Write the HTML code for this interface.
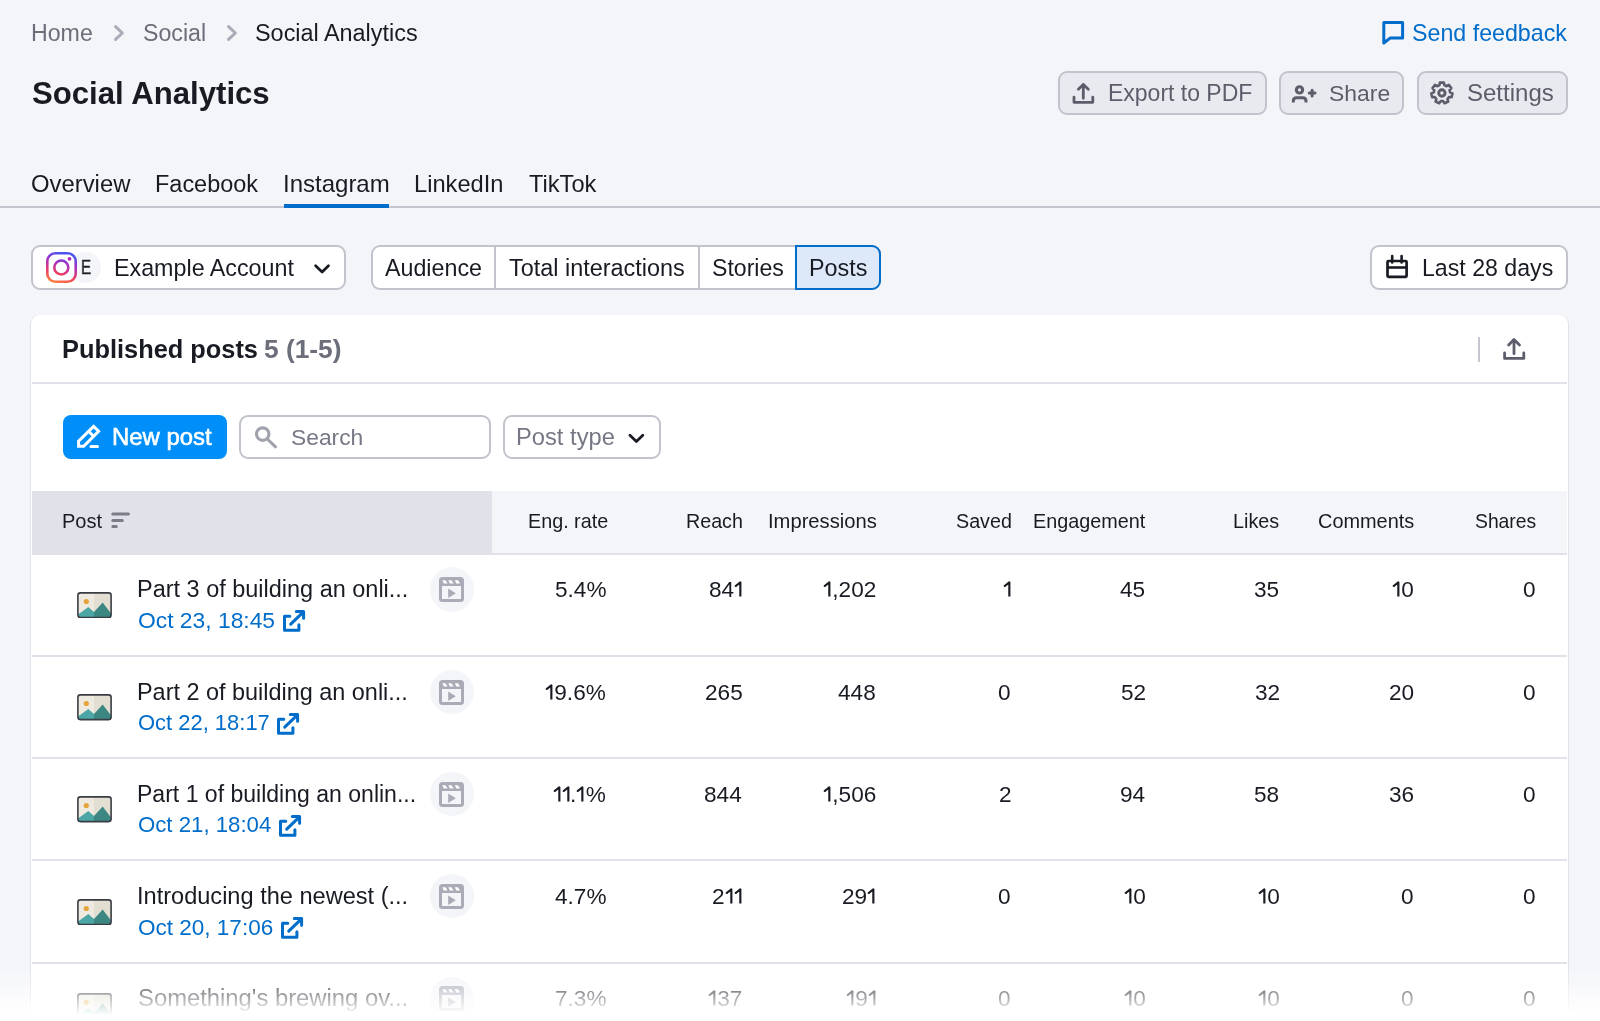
<!DOCTYPE html>
<html><head><meta charset="utf-8"><style>
html,body{margin:0;padding:0;}
body{width:1600px;height:1021px;overflow:hidden;position:relative;background:#f4f5f9;font-family:"Liberation Sans",sans-serif;}
.t{position:absolute;white-space:nowrap;will-change:transform;}
</style></head><body>
<div class="t" style="left:30.90px;top:20.00px;font-size:23.17px;line-height:26px;color:#6c6e79;">Home</div>
<svg style="position:absolute;left:105px;top:20px;width:30px;height:26px;" viewBox="0 0 30 26" fill="none"><path d="M10.6 6.6 L17.3 13 L10.6 19.4" stroke="#a9abb6" stroke-width="3" stroke-linecap="round" stroke-linejoin="round"/></svg>
<div class="t" style="left:142.66px;top:20.00px;font-size:23.18px;line-height:26px;color:#6c6e79;">Social</div>
<svg style="position:absolute;left:218px;top:20px;width:30px;height:26px;" viewBox="0 0 30 26" fill="none"><path d="M10.6 6.6 L17.3 13 L10.6 19.4" stroke="#a9abb6" stroke-width="3" stroke-linecap="round" stroke-linejoin="round"/></svg>
<div class="t" style="left:255.05px;top:20.00px;font-size:23.42px;line-height:26px;color:#191b23;">Social Analytics</div>
<svg style="position:absolute;left:1378px;top:16px;width:32px;height:32px;" viewBox="0 0 32 32" fill="none"><path d="M5.8 6.4 H24.6 V22.1 H12.1 L5.8 27 Z" stroke="#006dca" stroke-width="3" stroke-linejoin="round"/></svg>
<div class="t" style="left:1411.95px;top:20.00px;font-size:23.23px;line-height:26px;color:#006dca;">Send feedback</div>
<div class="t" style="left:31.57px;top:76.00px;font-size:31.15px;line-height:35px;font-weight:700;color:#191b23;">Social Analytics</div>
<div style="position:absolute;left:1058px;top:71px;width:209px;height:44px;box-sizing:border-box;border:2px solid #c1c4cc;border-radius:9px;background:#e9eaef;"></div>
<div style="position:absolute;left:1279px;top:71px;width:125px;height:44px;box-sizing:border-box;border:2px solid #c1c4cc;border-radius:9px;background:#e9eaef;"></div>
<div style="position:absolute;left:1417px;top:71px;width:151px;height:44px;box-sizing:border-box;border:2px solid #c1c4cc;border-radius:9px;background:#e9eaef;"></div>
<svg style="position:absolute;left:1068px;top:78px;width:32px;height:30px;" viewBox="0 0 32 30" fill="none"><path d="M15.3 20.3 V6.5 M10.4 11.3 L15.3 6.4 L20.3 11.3" stroke="#5b5e6a" stroke-width="2.8" stroke-linecap="round" stroke-linejoin="round"/><path d="M6 19.2 V24.3 H24.8 V19.2" stroke="#5b5e6a" stroke-width="2.8" stroke-linecap="round" stroke-linejoin="round"/></svg>
<div class="t" style="left:1107.86px;top:80.00px;font-size:22.99px;line-height:26px;color:#5b5e6a;">Export to PDF</div>
<svg style="position:absolute;left:1287px;top:78px;width:35px;height:30px;" viewBox="0 0 35 30" fill="none"><circle cx="12.5" cy="11.9" r="3.15" stroke="#5b5e6a" stroke-width="3.1"/><path d="M6.3 24.6 V23 Q6.3 19.7 9.6 19.7 H15.7 Q19 19.7 19 23 V24.6" stroke="#5b5e6a" stroke-width="3"/><path d="M25.1 12.2 V18 M22.2 15.1 H28" stroke="#5b5e6a" stroke-width="3" stroke-linecap="round"/></svg>
<div class="t" style="left:1329.47px;top:80.00px;font-size:22.91px;line-height:26px;color:#5b5e6a;">Share</div>
<svg style="position:absolute;left:1425px;top:76px;width:35px;height:34px;" viewBox="0 0 35 34" fill="none"><path d="M14.50 9.16 L14.88 6.59 L18.92 6.59 L19.30 9.16 L21.54 10.24 L23.77 8.93 L26.30 12.09 L24.53 13.99 L25.08 16.41 L27.49 17.34 L26.59 21.29 L24.01 21.08 L22.46 23.02 L23.24 25.50 L19.59 27.25 L18.14 25.11 L15.66 25.11 L14.21 27.25 L10.56 25.50 L11.34 23.02 L9.79 21.08 L7.21 21.29 L6.31 17.34 L8.72 16.41 L9.27 13.99 L7.50 12.09 L10.03 8.93 L12.26 10.24 Z" stroke="#5b5e6a" stroke-width="2.6" stroke-linejoin="round"/><circle cx="16.90" cy="17.00" r="3.2" stroke="#5b5e6a" stroke-width="2.9"/></svg>
<div class="t" style="left:1466.92px;top:79.00px;font-size:24.02px;line-height:27px;color:#5b5e6a;">Settings</div>
<div class="t" style="left:31.13px;top:170.00px;font-size:23.85px;line-height:27px;color:#191b23;">Overview</div>
<div class="t" style="left:155.42px;top:171.00px;font-size:23.48px;line-height:26px;color:#191b23;">Facebook</div>
<div class="t" style="left:283.14px;top:170.00px;font-size:24.00px;line-height:27px;color:#191b23;">Instagram</div>
<div class="t" style="left:414.11px;top:171.00px;font-size:23.66px;line-height:26px;color:#191b23;">LinkedIn</div>
<div class="t" style="left:529.23px;top:171.00px;font-size:23.64px;line-height:26px;color:#191b23;">TikTok</div>
<div style="position:absolute;left:0px;top:206px;width:1600px;height:2px;background:#c4c7cf;"></div>
<div style="position:absolute;left:284px;top:204px;width:105px;height:4px;background:#006dca;"></div>
<div style="position:absolute;left:31px;top:245px;width:315px;height:45px;box-sizing:border-box;border:2px solid #c1c4cc;border-radius:9px;background:#fff;"></div>
<div style="position:absolute;left:70px;top:252px;width:31px;height:31px;border-radius:50%;background:#f4f5f9;"></div>
<svg style="position:absolute;left:46px;top:252px;width:31px;height:31px;" viewBox="0 0 31 31" fill="none"><defs><linearGradient id="ig" gradientUnits="userSpaceOnUse" x1="12" y1="0" x2="3" y2="31"><stop offset="0" stop-color="#4b55f0"/><stop offset="0.3" stop-color="#a52ec4"/><stop offset="0.65" stop-color="#ec3f62"/><stop offset="1" stop-color="#ff8d3a"/></linearGradient></defs><rect x="1.3" y="1.3" width="28.4" height="28.4" rx="8" fill="#fff" stroke="url(#ig)" stroke-width="2.6"/><circle cx="15.3" cy="15.5" r="7" stroke="url(#ig)" stroke-width="2.6"/><circle cx="23.5" cy="6.8" r="1.9" fill="#b22bbd"/></svg>
<div class="t" style="left:81.00px;top:256.00px;font-size:20.00px;line-height:22px;color:#191b23;transform:scaleX(0.76);transform-origin:0 0;-webkit-text-stroke:0.35px #191b23;">E</div>
<div class="t" style="left:114.44px;top:255.00px;font-size:23.29px;line-height:26px;color:#191b23;">Example Account</div>
<svg style="position:absolute;left:308px;top:254px;width:28px;height:28px;" viewBox="0 0 28 28" fill="none"><path d="M7.6 11.7 L14.1 18 L20.5 11.7" stroke="#191b23" stroke-width="2.75" stroke-linecap="round" stroke-linejoin="round"/></svg>
<div style="position:absolute;left:371px;top:245px;width:510px;height:45px;box-sizing:border-box;border:2px solid #c1c4cc;border-radius:9px;background:#fff;"></div>
<div style="position:absolute;left:494px;top:245px;width:2px;height:45px;background:#c1c4cc;"></div>
<div style="position:absolute;left:697.5px;top:245px;width:2.0px;height:45px;background:#c1c4cc;"></div>
<div style="position:absolute;left:795px;top:245px;width:86px;height:45px;box-sizing:border-box;border:2px solid #006dca;border-radius:0 9px 9px 0;background:#dde9f9;"></div>
<div class="t" style="left:385.30px;top:255.00px;font-size:23.25px;line-height:26px;color:#191b23;">Audience</div>
<div class="t" style="left:509.13px;top:255.00px;font-size:23.42px;line-height:26px;color:#191b23;">Total interactions</div>
<div class="t" style="left:711.76px;top:255.00px;font-size:23.10px;line-height:26px;color:#191b23;">Stories</div>
<div class="t" style="left:808.83px;top:255.00px;font-size:23.35px;line-height:26px;color:#191b23;">Posts</div>
<div style="position:absolute;left:1370px;top:245px;width:198px;height:45px;box-sizing:border-box;border:2px solid #c1c4cc;border-radius:9px;background:#fff;"></div>
<svg style="position:absolute;left:1382px;top:250px;width:30px;height:33px;" viewBox="0 0 30 33" fill="none"><rect x="5.5" y="11" width="19.1" height="15.8" rx="1" stroke="#191b23" stroke-width="2.7"/><path d="M5.5 17.5 H24.6" stroke="#191b23" stroke-width="2.6"/><path d="M10.2 6.1 V12.4 M19.6 6.1 V12.4" stroke="#191b23" stroke-width="2.6" stroke-linecap="round"/></svg>
<div class="t" style="left:1422.05px;top:255.00px;font-size:23.15px;line-height:26px;color:#191b23;">Last 28 days</div>
<div style="position:absolute;left:30.2px;top:314.7px;width:1538.3999999999999px;height:785.3px;box-sizing:border-box;border:1.5px solid #e0e1e9;border-top:none;border-radius:9px;background:#fff;"></div>
<div class="t" style="left:61.95px;top:335.00px;font-size:25.38px;line-height:28px;font-weight:700;color:#191b23;">Published posts</div>
<div class="t" style="left:263.61px;top:334.00px;font-size:26.32px;line-height:30px;font-weight:700;color:#6c6e79;">5 (1-5)</div>
<div style="position:absolute;left:1478px;top:337px;width:1.5px;height:24.5px;background:#c4c7cf;"></div>
<svg style="position:absolute;left:1500px;top:335px;width:30px;height:30px;" viewBox="0 0 30 30" fill="none"><path d="M14 18.7 V4.6 M8.6 10.1 L14 4.6 L19.5 10.1" stroke="#5b5e6a" stroke-width="2.8" stroke-linecap="round" stroke-linejoin="round"/><path d="M4.6 17.9 V23.4 H23.8 V17.9" stroke="#5b5e6a" stroke-width="2.8" stroke-linecap="round" stroke-linejoin="round"/></svg>
<div style="position:absolute;left:32px;top:382px;width:1535px;height:2px;background:#e0e1e9;"></div>
<div style="position:absolute;left:63px;top:415px;width:163.5px;height:44px;border-radius:8px;background:#008ff8;"></div>
<svg style="position:absolute;left:72px;top:420px;width:32px;height:32px;" viewBox="0 0 32 32" fill="none"><path d="M6.6 26.3 V21.1 L21.6 6.4 L26.6 11.3 L11.7 26.3 Z M16.6 11.4 L21.6 16.3" stroke="#fff" stroke-width="3" stroke-linejoin="miter"/><path d="M19 26.6 H25.5" stroke="#fff" stroke-width="3" stroke-linecap="round"/></svg>
<div class="t" style="left:112.49px;top:423.00px;font-size:23.90px;line-height:27px;color:#fff;-webkit-text-stroke:0.6px #fff;">New post</div>
<div style="position:absolute;left:239px;top:415px;width:252px;height:44px;box-sizing:border-box;border:2px solid #c1c4cc;border-radius:9px;background:#fff;"></div>
<svg style="position:absolute;left:250px;top:422px;width:32px;height:32px;" viewBox="0 0 32 32" fill="none"><circle cx="12.7" cy="12.1" r="6.25" stroke="#a0a3ad" stroke-width="3.1"/><path d="M17.3 17 L25.5 24.8" stroke="#a0a3ad" stroke-width="3.1" stroke-linecap="round"/></svg>
<div class="t" style="left:291.17px;top:424.00px;font-size:22.82px;line-height:26px;color:#757884;">Search</div>
<div style="position:absolute;left:503px;top:415px;width:158px;height:44px;box-sizing:border-box;border:2px solid #c1c4cc;border-radius:9px;background:#fff;"></div>
<div class="t" style="left:516.40px;top:424.00px;font-size:23.73px;line-height:26px;color:#757884;">Post type</div>
<svg style="position:absolute;left:622px;top:424px;width:28px;height:28px;" viewBox="0 0 28 28" fill="none"><path d="M7.95 11.25 L14.4 17.55 L20.8 11.25" stroke="#191b23" stroke-width="2.75" stroke-linecap="round" stroke-linejoin="round"/></svg>
<div style="position:absolute;left:32px;top:491px;width:1535px;height:63px;background:#f4f5f9;"></div>
<div style="position:absolute;left:32px;top:491px;width:460px;height:63px;background:#e0e1e9;"></div>
<div style="position:absolute;left:32px;top:553px;width:1535px;height:1.7999999999999545px;background:#e0e1e9;"></div>
<div class="t" style="left:61.50px;top:510.00px;font-size:20.05px;line-height:22px;color:#191b23;">Post</div>
<svg style="position:absolute;left:106px;top:506px;width:30px;height:28px;" viewBox="0 0 30 28" fill="none"><path d="M6.8 8.1 H22.4 M6.8 14.4 H16.3 M6.8 20.6 H10.3" stroke="#7a7c86" stroke-width="3" stroke-linecap="round"/></svg>
<div class="t" style="left:528.02px;top:510.00px;font-size:19.76px;line-height:22px;color:#191b23;">Eng. rate</div>
<div class="t" style="left:685.93px;top:510.00px;font-size:19.67px;line-height:22px;color:#191b23;">Reach</div>
<div class="t" style="left:768.18px;top:510.00px;font-size:20.18px;line-height:22px;color:#191b23;">Impressions</div>
<div class="t" style="left:955.86px;top:510.00px;font-size:19.72px;line-height:22px;color:#191b23;">Saved</div>
<div class="t" style="left:1032.92px;top:510.00px;font-size:19.79px;line-height:22px;color:#191b23;">Engagement</div>
<div class="t" style="left:1233.21px;top:510.00px;font-size:19.82px;line-height:22px;color:#191b23;">Likes</div>
<div class="t" style="left:1318.00px;top:510.00px;font-size:19.92px;line-height:22px;color:#191b23;">Comments</div>
<div class="t" style="left:1474.83px;top:511.00px;font-size:19.32px;line-height:21px;color:#191b23;">Shares</div>
<svg style="position:absolute;left:77px;top:591.9px;width:35px;height:26.5px;" viewBox="0 35 26.5" fill="none"><rect x="1" y="1" width="33" height="24.5" rx="2.5" fill="#efeadf"/><rect x="17" y="1" width="17" height="24.5" fill="#e2ded2"/><circle cx="9.3" cy="9.5" r="2.6" fill="#e5a53a"/><path d="M1 22.5 L11.3 15 L17 20 V25.5 H1 Z" fill="#4ba6a5"/><path d="M17 20 L25.7 10.5 L34 21.5 V25.5 H17 Z" fill="#3d8783"/><rect x="0.9" y="0.9" width="33.2" height="24.7" rx="2.5" stroke="#3a3d44" stroke-width="1.6"/></svg>
<div class="t" style="left:136.82px;top:576.00px;font-size:23.47px;line-height:26px;color:#191b23;">Part 3 of building an onli...</div>
<div class="t" style="left:137.67px;top:607.00px;font-size:22.84px;line-height:26px;color:#006dca;">Oct 23, 18:45</div>
<svg style="position:absolute;left:282.59999999999997px;top:610.0px;width:26.0px;height:30.0px;" viewBox="0 26 30" fill="none"><path d="M6.8 6.2 H1.5 V20.3 H15.9 V14.7" stroke="#006dca" stroke-width="3" stroke-linecap="round" stroke-linejoin="round"/><path d="M7.7 14.1 L19.7 2.6 M13.3 1.5 H20.6 V8.2" stroke="#006dca" stroke-width="3" stroke-linecap="round" stroke-linejoin="round"/></svg>
<div style="position:absolute;left:430px;top:567.4px;width:44px;height:44.200000000000045px;border-radius:50%;background:#f4f5f9;"></div>
<svg style="position:absolute;left:439.3px;top:577.1px;width:26.0px;height:25.0px;" viewBox="0 26 25" fill="none"><rect x="1.5" y="1.5" width="22" height="22" rx="2" stroke="#a9abb6" stroke-width="3"/><rect x="1.5" y="1.5" width="22" height="7.5" fill="#a9abb6"/><path d="M3.3 3.2 H6.4 L8.6 6.6 H4.8 Z M9.3 3.2 H12.4 L14.6 6.6 H10.8 Z M15.8 3.2 H18.9 L21.1 6.6 H17.3 Z" fill="#fff"/><path d="M9.2 11.5 L16.8 16.2 L9.2 20.9 Z" fill="#a9abb6"/></svg>
<div class="t" style="left:554.66px;top:577.00px;font-size:22.60px;line-height:25px;color:#191b23;">5.4%</div>
<div class="t" style="left:708.86px;top:577.00px;font-size:22.60px;line-height:25px;color:#191b23;">84<span style="display:inline-block;width:9.3px;height:16.6px;vertical-align:baseline;margin-right:-0px"><svg width="9.3" height="16.6" viewBox="0 0 9.3 16.6" style="display:block" fill="none"><path d="M1.7 6.0 L6.35 2.3 V16.6" stroke="#191b23" stroke-width="2.15" stroke-linejoin="round"/><circle cx="1.7" cy="6.0" r="1.07" fill="#191b23"/></svg></span></div>
<div class="t" style="left:822.87px;top:577.00px;font-size:22.60px;line-height:25px;color:#191b23;"><span style="display:inline-block;width:9.3px;height:16.6px;vertical-align:baseline;margin-right:-0px"><svg width="9.3" height="16.6" viewBox="0 0 9.3 16.6" style="display:block" fill="none"><path d="M1.7 6.0 L6.35 2.3 V16.6" stroke="#191b23" stroke-width="2.15" stroke-linejoin="round"/><circle cx="1.7" cy="6.0" r="1.07" fill="#191b23"/></svg></span>,202</div>
<div class="t" style="left:1002.80px;top:577.00px;font-size:22.60px;line-height:25px;color:#191b23;"><span style="display:inline-block;width:9.3px;height:16.6px;vertical-align:baseline;margin-right:-0px"><svg width="9.3" height="16.6" viewBox="0 0 9.3 16.6" style="display:block" fill="none"><path d="M1.7 6.0 L6.35 2.3 V16.6" stroke="#191b23" stroke-width="2.15" stroke-linejoin="round"/><circle cx="1.7" cy="6.0" r="1.07" fill="#191b23"/></svg></span></div>
<div class="t" style="left:1120.39px;top:577.00px;font-size:22.60px;line-height:25px;color:#191b23;">45</div>
<div class="t" style="left:1254.39px;top:577.00px;font-size:22.60px;line-height:25px;color:#191b23;">35</div>
<div class="t" style="left:1392.15px;top:577.00px;font-size:22.60px;line-height:25px;color:#191b23;"><span style="display:inline-block;width:9.3px;height:16.6px;vertical-align:baseline;margin-right:-0px"><svg width="9.3" height="16.6" viewBox="0 0 9.3 16.6" style="display:block" fill="none"><path d="M1.7 6.0 L6.35 2.3 V16.6" stroke="#191b23" stroke-width="2.15" stroke-linejoin="round"/><circle cx="1.7" cy="6.0" r="1.07" fill="#191b23"/></svg></span>0</div>
<div class="t" style="left:1523.25px;top:577.00px;font-size:22.60px;line-height:25px;color:#191b23;">0</div>
<div style="position:absolute;left:32px;top:655px;width:1535px;height:2px;background:#e2e3ea;"></div>
<svg style="position:absolute;left:77px;top:694.4px;width:35px;height:26.5px;" viewBox="0 35 26.5" fill="none"><rect x="1" y="1" width="33" height="24.5" rx="2.5" fill="#efeadf"/><rect x="17" y="1" width="17" height="24.5" fill="#e2ded2"/><circle cx="9.3" cy="9.5" r="2.6" fill="#e5a53a"/><path d="M1 22.5 L11.3 15 L17 20 V25.5 H1 Z" fill="#4ba6a5"/><path d="M17 20 L25.7 10.5 L34 21.5 V25.5 H17 Z" fill="#3d8783"/><rect x="0.9" y="0.9" width="33.2" height="24.7" rx="2.5" stroke="#3a3d44" stroke-width="1.6"/></svg>
<div class="t" style="left:136.83px;top:679.00px;font-size:23.43px;line-height:26px;color:#191b23;">Part 2 of building an onli...</div>
<div class="t" style="left:137.71px;top:710.00px;font-size:21.96px;line-height:25px;color:#006dca;">Oct 22, 18:17</div>
<svg style="position:absolute;left:277.2px;top:712.5px;width:26.0px;height:30.0px;" viewBox="0 26 30" fill="none"><path d="M6.8 6.2 H1.5 V20.3 H15.9 V14.7" stroke="#006dca" stroke-width="3" stroke-linecap="round" stroke-linejoin="round"/><path d="M7.7 14.1 L19.7 2.6 M13.3 1.5 H20.6 V8.2" stroke="#006dca" stroke-width="3" stroke-linecap="round" stroke-linejoin="round"/></svg>
<div style="position:absolute;left:430px;top:669.9px;width:44px;height:44.200000000000045px;border-radius:50%;background:#f4f5f9;"></div>
<svg style="position:absolute;left:439.3px;top:679.6px;width:26.0px;height:25.0px;" viewBox="0 26 25" fill="none"><rect x="1.5" y="1.5" width="22" height="22" rx="2" stroke="#a9abb6" stroke-width="3"/><rect x="1.5" y="1.5" width="22" height="7.5" fill="#a9abb6"/><path d="M3.3 3.2 H6.4 L8.6 6.6 H4.8 Z M9.3 3.2 H12.4 L14.6 6.6 H10.8 Z M15.8 3.2 H18.9 L21.1 6.6 H17.3 Z" fill="#fff"/><path d="M9.2 11.5 L16.8 16.2 L9.2 20.9 Z" fill="#a9abb6"/></svg>
<div class="t" style="left:545.36px;top:680.00px;font-size:22.60px;line-height:25px;color:#191b23;"><span style="display:inline-block;width:9.3px;height:16.6px;vertical-align:baseline;margin-right:-0px"><svg width="9.3" height="16.6" viewBox="0 0 9.3 16.6" style="display:block" fill="none"><path d="M1.7 6.0 L6.35 2.3 V16.6" stroke="#191b23" stroke-width="2.15" stroke-linejoin="round"/><circle cx="1.7" cy="6.0" r="1.07" fill="#191b23"/></svg></span>9.6%</div>
<div class="t" style="left:704.62px;top:680.00px;font-size:22.60px;line-height:25px;color:#191b23;">265</div>
<div class="t" style="left:838.22px;top:680.00px;font-size:22.60px;line-height:25px;color:#191b23;">448</div>
<div class="t" style="left:998.45px;top:680.00px;font-size:22.60px;line-height:25px;color:#191b23;">0</div>
<div class="t" style="left:1120.62px;top:680.00px;font-size:22.60px;line-height:25px;color:#191b23;">52</div>
<div class="t" style="left:1254.62px;top:680.00px;font-size:22.60px;line-height:25px;color:#191b23;">32</div>
<div class="t" style="left:1388.88px;top:680.00px;font-size:22.60px;line-height:25px;color:#191b23;">20</div>
<div class="t" style="left:1523.25px;top:680.00px;font-size:22.60px;line-height:25px;color:#191b23;">0</div>
<div style="position:absolute;left:32px;top:757px;width:1535px;height:2px;background:#e2e3ea;"></div>
<svg style="position:absolute;left:77px;top:796.4px;width:35px;height:26.5px;" viewBox="0 35 26.5" fill="none"><rect x="1" y="1" width="33" height="24.5" rx="2.5" fill="#efeadf"/><rect x="17" y="1" width="17" height="24.5" fill="#e2ded2"/><circle cx="9.3" cy="9.5" r="2.6" fill="#e5a53a"/><path d="M1 22.5 L11.3 15 L17 20 V25.5 H1 Z" fill="#4ba6a5"/><path d="M17 20 L25.7 10.5 L34 21.5 V25.5 H17 Z" fill="#3d8783"/><rect x="0.9" y="0.9" width="33.2" height="24.7" rx="2.5" stroke="#3a3d44" stroke-width="1.6"/></svg>
<div class="t" style="left:136.86px;top:781.00px;font-size:23.04px;line-height:26px;color:#191b23;">Part 1 of building an onlin...</div>
<div class="t" style="left:137.70px;top:812.00px;font-size:22.21px;line-height:25px;color:#006dca;">Oct 21, 18:04</div>
<svg style="position:absolute;left:279.09999999999997px;top:814.5px;width:26.0px;height:30.0px;" viewBox="0 26 30" fill="none"><path d="M6.8 6.2 H1.5 V20.3 H15.9 V14.7" stroke="#006dca" stroke-width="3" stroke-linecap="round" stroke-linejoin="round"/><path d="M7.7 14.1 L19.7 2.6 M13.3 1.5 H20.6 V8.2" stroke="#006dca" stroke-width="3" stroke-linecap="round" stroke-linejoin="round"/></svg>
<div style="position:absolute;left:430px;top:771.9px;width:44px;height:44.200000000000045px;border-radius:50%;background:#f4f5f9;"></div>
<svg style="position:absolute;left:439.3px;top:781.6px;width:26.0px;height:25.0px;" viewBox="0 26 25" fill="none"><rect x="1.5" y="1.5" width="22" height="22" rx="2" stroke="#a9abb6" stroke-width="3"/><rect x="1.5" y="1.5" width="22" height="7.5" fill="#a9abb6"/><path d="M3.3 3.2 H6.4 L8.6 6.6 H4.8 Z M9.3 3.2 H12.4 L14.6 6.6 H10.8 Z M15.8 3.2 H18.9 L21.1 6.6 H17.3 Z" fill="#fff"/><path d="M9.2 11.5 L16.8 16.2 L9.2 20.9 Z" fill="#a9abb6"/></svg>
<div class="t" style="left:553.40px;top:782.00px;font-size:22.60px;line-height:25px;color:#191b23;"><span style="display:inline-block;width:9.3px;height:16.6px;vertical-align:baseline;margin-right:-0px"><svg width="9.3" height="16.6" viewBox="0 0 9.3 16.6" style="display:block" fill="none"><path d="M1.7 6.0 L6.35 2.3 V16.6" stroke="#191b23" stroke-width="2.15" stroke-linejoin="round"/><circle cx="1.7" cy="6.0" r="1.07" fill="#191b23"/></svg></span><span style="display:inline-block;width:9.3px;height:16.6px;vertical-align:baseline;margin-right:-1.5px"><svg width="9.3" height="16.6" viewBox="0 0 9.3 16.6" style="display:block" fill="none"><path d="M1.7 6.0 L6.35 2.3 V16.6" stroke="#191b23" stroke-width="2.15" stroke-linejoin="round"/><circle cx="1.7" cy="6.0" r="1.07" fill="#191b23"/></svg></span>.<span style="display:inline-block;width:9.3px;height:16.6px;vertical-align:baseline;margin-right:-0px"><svg width="9.3" height="16.6" viewBox="0 0 9.3 16.6" style="display:block" fill="none"><path d="M1.7 6.0 L6.35 2.3 V16.6" stroke="#191b23" stroke-width="2.15" stroke-linejoin="round"/><circle cx="1.7" cy="6.0" r="1.07" fill="#191b23"/></svg></span>%</div>
<div class="t" style="left:704.40px;top:782.00px;font-size:22.60px;line-height:25px;color:#191b23;">844</div>
<div class="t" style="left:822.64px;top:782.00px;font-size:22.60px;line-height:25px;color:#191b23;"><span style="display:inline-block;width:9.3px;height:16.6px;vertical-align:baseline;margin-right:-0px"><svg width="9.3" height="16.6" viewBox="0 0 9.3 16.6" style="display:block" fill="none"><path d="M1.7 6.0 L6.35 2.3 V16.6" stroke="#191b23" stroke-width="2.15" stroke-linejoin="round"/><circle cx="1.7" cy="6.0" r="1.07" fill="#191b23"/></svg></span>,506</div>
<div class="t" style="left:998.79px;top:782.00px;font-size:22.60px;line-height:25px;color:#191b23;">2</div>
<div class="t" style="left:1120.17px;top:782.00px;font-size:22.60px;line-height:25px;color:#191b23;">94</div>
<div class="t" style="left:1254.39px;top:782.00px;font-size:22.60px;line-height:25px;color:#191b23;">58</div>
<div class="t" style="left:1388.99px;top:782.00px;font-size:22.60px;line-height:25px;color:#191b23;">36</div>
<div class="t" style="left:1523.25px;top:782.00px;font-size:22.60px;line-height:25px;color:#191b23;">0</div>
<div style="position:absolute;left:32px;top:859px;width:1535px;height:2px;background:#e2e3ea;"></div>
<svg style="position:absolute;left:77px;top:898.5px;width:35px;height:26.5px;" viewBox="0 35 26.5" fill="none"><rect x="1" y="1" width="33" height="24.5" rx="2.5" fill="#efeadf"/><rect x="17" y="1" width="17" height="24.5" fill="#e2ded2"/><circle cx="9.3" cy="9.5" r="2.6" fill="#e5a53a"/><path d="M1 22.5 L11.3 15 L17 20 V25.5 H1 Z" fill="#4ba6a5"/><path d="M17 20 L25.7 10.5 L34 21.5 V25.5 H17 Z" fill="#3d8783"/><rect x="0.9" y="0.9" width="33.2" height="24.7" rx="2.5" stroke="#3a3d44" stroke-width="1.6"/></svg>
<div class="t" style="left:136.58px;top:883.00px;font-size:23.57px;line-height:26px;color:#191b23;">Introducing the newest (...</div>
<div class="t" style="left:137.69px;top:915.00px;font-size:22.52px;line-height:25px;color:#006dca;">Oct 20, 17:06</div>
<svg style="position:absolute;left:280.7px;top:916.6px;width:26.0px;height:30.0px;" viewBox="0 26 30" fill="none"><path d="M6.8 6.2 H1.5 V20.3 H15.9 V14.7" stroke="#006dca" stroke-width="3" stroke-linecap="round" stroke-linejoin="round"/><path d="M7.7 14.1 L19.7 2.6 M13.3 1.5 H20.6 V8.2" stroke="#006dca" stroke-width="3" stroke-linecap="round" stroke-linejoin="round"/></svg>
<div style="position:absolute;left:430px;top:874.0px;width:44px;height:44.200000000000045px;border-radius:50%;background:#f4f5f9;"></div>
<svg style="position:absolute;left:439.3px;top:883.7px;width:26.0px;height:25.0px;" viewBox="0 26 25" fill="none"><rect x="1.5" y="1.5" width="22" height="22" rx="2" stroke="#a9abb6" stroke-width="3"/><rect x="1.5" y="1.5" width="22" height="7.5" fill="#a9abb6"/><path d="M3.3 3.2 H6.4 L8.6 6.6 H4.8 Z M9.3 3.2 H12.4 L14.6 6.6 H10.8 Z M15.8 3.2 H18.9 L21.1 6.6 H17.3 Z" fill="#fff"/><path d="M9.2 11.5 L16.8 16.2 L9.2 20.9 Z" fill="#a9abb6"/></svg>
<div class="t" style="left:554.66px;top:884.00px;font-size:22.60px;line-height:25px;color:#191b23;">4.7%</div>
<div class="t" style="left:712.13px;top:884.00px;font-size:22.60px;line-height:25px;color:#191b23;">2<span style="display:inline-block;width:9.3px;height:16.6px;vertical-align:baseline;margin-right:-0px"><svg width="9.3" height="16.6" viewBox="0 0 9.3 16.6" style="display:block" fill="none"><path d="M1.7 6.0 L6.35 2.3 V16.6" stroke="#191b23" stroke-width="2.15" stroke-linejoin="round"/><circle cx="1.7" cy="6.0" r="1.07" fill="#191b23"/></svg></span><span style="display:inline-block;width:9.3px;height:16.6px;vertical-align:baseline;margin-right:-0px"><svg width="9.3" height="16.6" viewBox="0 0 9.3 16.6" style="display:block" fill="none"><path d="M1.7 6.0 L6.35 2.3 V16.6" stroke="#191b23" stroke-width="2.15" stroke-linejoin="round"/><circle cx="1.7" cy="6.0" r="1.07" fill="#191b23"/></svg></span></div>
<div class="t" style="left:842.46px;top:884.00px;font-size:22.60px;line-height:25px;color:#191b23;">29<span style="display:inline-block;width:9.3px;height:16.6px;vertical-align:baseline;margin-right:-0px"><svg width="9.3" height="16.6" viewBox="0 0 9.3 16.6" style="display:block" fill="none"><path d="M1.7 6.0 L6.35 2.3 V16.6" stroke="#191b23" stroke-width="2.15" stroke-linejoin="round"/><circle cx="1.7" cy="6.0" r="1.07" fill="#191b23"/></svg></span></div>
<div class="t" style="left:998.45px;top:884.00px;font-size:22.60px;line-height:25px;color:#191b23;">0</div>
<div class="t" style="left:1123.55px;top:884.00px;font-size:22.60px;line-height:25px;color:#191b23;"><span style="display:inline-block;width:9.3px;height:16.6px;vertical-align:baseline;margin-right:-0px"><svg width="9.3" height="16.6" viewBox="0 0 9.3 16.6" style="display:block" fill="none"><path d="M1.7 6.0 L6.35 2.3 V16.6" stroke="#191b23" stroke-width="2.15" stroke-linejoin="round"/><circle cx="1.7" cy="6.0" r="1.07" fill="#191b23"/></svg></span>0</div>
<div class="t" style="left:1257.55px;top:884.00px;font-size:22.60px;line-height:25px;color:#191b23;"><span style="display:inline-block;width:9.3px;height:16.6px;vertical-align:baseline;margin-right:-0px"><svg width="9.3" height="16.6" viewBox="0 0 9.3 16.6" style="display:block" fill="none"><path d="M1.7 6.0 L6.35 2.3 V16.6" stroke="#191b23" stroke-width="2.15" stroke-linejoin="round"/><circle cx="1.7" cy="6.0" r="1.07" fill="#191b23"/></svg></span>0</div>
<div class="t" style="left:1401.45px;top:884.00px;font-size:22.60px;line-height:25px;color:#191b23;">0</div>
<div class="t" style="left:1523.25px;top:884.00px;font-size:22.60px;line-height:25px;color:#191b23;">0</div>
<div style="position:absolute;left:32px;top:962px;width:1535px;height:2px;background:#e2e3ea;"></div>
<svg style="position:absolute;left:77px;top:993.0px;width:35px;height:26.5px;" viewBox="0 35 26.5" fill="none"><rect x="1" y="1" width="33" height="24.5" rx="2.5" fill="#efeadf"/><rect x="17" y="1" width="17" height="24.5" fill="#e2ded2"/><circle cx="9.3" cy="9.5" r="2.6" fill="#e5a53a"/><path d="M1 22.5 L11.3 15 L17 20 V25.5 H1 Z" fill="#4ba6a5"/><path d="M17 20 L25.7 10.5 L34 21.5 V25.5 H17 Z" fill="#3d8783"/><rect x="0.9" y="0.9" width="33.2" height="24.7" rx="2.5" stroke="#3a3d44" stroke-width="1.6"/></svg>
<div class="t" style="left:137.63px;top:984.00px;font-size:23.82px;line-height:27px;color:#191b23;">Something's brewing ov...</div>
<div class="t" style="left:137.69px;top:1017.00px;font-size:22.50px;line-height:25px;color:#006dca;">Oct 19, 12:00</div>
<svg style="position:absolute;left:280.7px;top:1019.3000000000001px;width:26.0px;height:29.999999999999886px;" viewBox="0 26 30" fill="none"><path d="M6.8 6.2 H1.5 V20.3 H15.9 V14.7" stroke="#006dca" stroke-width="3" stroke-linecap="round" stroke-linejoin="round"/><path d="M7.7 14.1 L19.7 2.6 M13.3 1.5 H20.6 V8.2" stroke="#006dca" stroke-width="3" stroke-linecap="round" stroke-linejoin="round"/></svg>
<div style="position:absolute;left:430px;top:976.7px;width:44px;height:44.200000000000045px;border-radius:50%;background:#f4f5f9;"></div>
<svg style="position:absolute;left:439.3px;top:986.4000000000001px;width:26.0px;height:25.0px;" viewBox="0 26 25" fill="none"><rect x="1.5" y="1.5" width="22" height="22" rx="2" stroke="#a9abb6" stroke-width="3"/><rect x="1.5" y="1.5" width="22" height="7.5" fill="#a9abb6"/><path d="M3.3 3.2 H6.4 L8.6 6.6 H4.8 Z M9.3 3.2 H12.4 L14.6 6.6 H10.8 Z M15.8 3.2 H18.9 L21.1 6.6 H17.3 Z" fill="#fff"/><path d="M9.2 11.5 L16.8 16.2 L9.2 20.9 Z" fill="#a9abb6"/></svg>
<div class="t" style="left:554.66px;top:986.00px;font-size:22.60px;line-height:25px;color:#191b23;">7.3%</div>
<div class="t" style="left:708.12px;top:986.00px;font-size:22.60px;line-height:25px;color:#191b23;"><span style="display:inline-block;width:9.3px;height:16.6px;vertical-align:baseline;margin-right:-0px"><svg width="9.3" height="16.6" viewBox="0 0 9.3 16.6" style="display:block" fill="none"><path d="M1.7 6.0 L6.35 2.3 V16.6" stroke="#191b23" stroke-width="2.15" stroke-linejoin="round"/><circle cx="1.7" cy="6.0" r="1.07" fill="#191b23"/></svg></span>37</div>
<div class="t" style="left:845.73px;top:986.00px;font-size:22.60px;line-height:25px;color:#191b23;"><span style="display:inline-block;width:9.3px;height:16.6px;vertical-align:baseline;margin-right:-0px"><svg width="9.3" height="16.6" viewBox="0 0 9.3 16.6" style="display:block" fill="none"><path d="M1.7 6.0 L6.35 2.3 V16.6" stroke="#191b23" stroke-width="2.15" stroke-linejoin="round"/><circle cx="1.7" cy="6.0" r="1.07" fill="#191b23"/></svg></span>9<span style="display:inline-block;width:9.3px;height:16.6px;vertical-align:baseline;margin-right:-0px"><svg width="9.3" height="16.6" viewBox="0 0 9.3 16.6" style="display:block" fill="none"><path d="M1.7 6.0 L6.35 2.3 V16.6" stroke="#191b23" stroke-width="2.15" stroke-linejoin="round"/><circle cx="1.7" cy="6.0" r="1.07" fill="#191b23"/></svg></span></div>
<div class="t" style="left:998.45px;top:986.00px;font-size:22.60px;line-height:25px;color:#191b23;">0</div>
<div class="t" style="left:1123.55px;top:986.00px;font-size:22.60px;line-height:25px;color:#191b23;"><span style="display:inline-block;width:9.3px;height:16.6px;vertical-align:baseline;margin-right:-0px"><svg width="9.3" height="16.6" viewBox="0 0 9.3 16.6" style="display:block" fill="none"><path d="M1.7 6.0 L6.35 2.3 V16.6" stroke="#191b23" stroke-width="2.15" stroke-linejoin="round"/><circle cx="1.7" cy="6.0" r="1.07" fill="#191b23"/></svg></span>0</div>
<div class="t" style="left:1257.55px;top:986.00px;font-size:22.60px;line-height:25px;color:#191b23;"><span style="display:inline-block;width:9.3px;height:16.6px;vertical-align:baseline;margin-right:-0px"><svg width="9.3" height="16.6" viewBox="0 0 9.3 16.6" style="display:block" fill="none"><path d="M1.7 6.0 L6.35 2.3 V16.6" stroke="#191b23" stroke-width="2.15" stroke-linejoin="round"/><circle cx="1.7" cy="6.0" r="1.07" fill="#191b23"/></svg></span>0</div>
<div class="t" style="left:1401.45px;top:986.00px;font-size:22.60px;line-height:25px;color:#191b23;">0</div>
<div class="t" style="left:1523.25px;top:986.00px;font-size:22.60px;line-height:25px;color:#191b23;">0</div>
<div style="position:absolute;left:0px;top:962px;width:1600px;height:59px;background:linear-gradient(to bottom, rgba(255,255,255,0) 0%, rgba(255,255,255,0.5) 50%, #fff 90%);"></div>
</body></html>
